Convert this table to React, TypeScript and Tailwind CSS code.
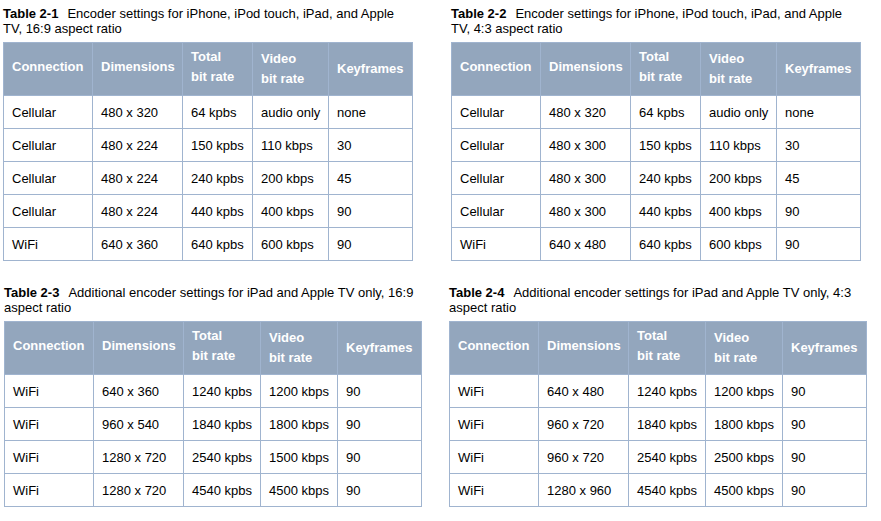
import React from "react";

type Table = {
  num: string;
  line1: string;
  line2: string;
  width: string;
  cols: string[];
  rows: string[][];
};

const headers = [
  { lines: ["Connection"], pad: "pt-[14px]" },
  { lines: ["Dimensions"], pad: "pt-[14px]" },
  { lines: ["Total", "bit rate"], pad: "pt-[4px]" },
  { lines: ["Video", "bit rate"], pad: "pt-[6px]" },
  { lines: ["Keyframes"], pad: "pt-[16px]" },
];

const narrow = ["w-[89px]", "w-[90px]", "w-[70px]", "w-[76px]", "w-[84px]"];
const wide = ["w-[89px]", "w-[90px]", "w-[77px]", "w-[77px]", "w-[84px]"];

const tables: Table[] = [
  {
    num: "Table 2-1",
    line1: "Encoder settings for iPhone, iPod touch, iPad, and Apple",
    line2: "TV, 16:9 aspect ratio",
    width: "w-[410px]",
    cols: narrow,
    rows: [
      ["Cellular", "480 x 320", "64 kpbs", "audio only", "none"],
      ["Cellular", "480 x 224", "150 kpbs", "110 kbps", "30"],
      ["Cellular", "480 x 224", "240 kpbs", "200 kbps", "45"],
      ["Cellular", "480 x 224", "440 kpbs", "400 kbps", "90"],
      ["WiFi", "640 x 360", "640 kpbs", "600 kbps", "90"],
    ],
  },
  {
    num: "Table 2-2",
    line1: "Encoder settings for iPhone, iPod touch, iPad, and Apple",
    line2: "TV, 4:3 aspect ratio",
    width: "w-[410px]",
    cols: narrow,
    rows: [
      ["Cellular", "480 x 320", "64 kpbs", "audio only", "none"],
      ["Cellular", "480 x 300", "150 kpbs", "110 kbps", "30"],
      ["Cellular", "480 x 300", "240 kpbs", "200 kbps", "45"],
      ["Cellular", "480 x 300", "440 kpbs", "400 kbps", "90"],
      ["WiFi", "640 x 480", "640 kpbs", "600 kbps", "90"],
    ],
  },
  {
    num: "Table 2-3",
    line1: "Additional encoder settings for iPad and Apple TV only, 16:9",
    line2: "aspect ratio",
    width: "w-[418px]",
    cols: wide,
    rows: [
      ["WiFi", "640 x 360", "1240 kpbs", "1200 kbps", "90"],
      ["WiFi", "960 x 540", "1840 kpbs", "1800 kbps", "90"],
      ["WiFi", "1280 x 720", "2540 kpbs", "1500 kbps", "90"],
      ["WiFi", "1280 x 720", "4540 kpbs", "4500 kbps", "90"],
    ],
  },
  {
    num: "Table 2-4",
    line1: "Additional encoder settings for iPad and Apple TV only, 4:3",
    line2: "aspect ratio",
    width: "w-[418px]",
    cols: wide,
    rows: [
      ["WiFi", "640 x 480", "1240 kpbs", "1200 kbps", "90"],
      ["WiFi", "960 x 720", "1840 kpbs", "1800 kbps", "90"],
      ["WiFi", "960 x 720", "2540 kpbs", "2500 kbps", "90"],
      ["WiFi", "1280 x 960", "4540 kpbs", "4500 kbps", "90"],
    ],
  },
];

const SettingsTable = ({ t }: { t: Table }) => (
  <div>
    <p className="text-[13px] leading-[15px] text-black whitespace-nowrap mb-[6px]">
      <span className="font-bold mr-[9px]">{t.num}</span>
      {t.line1}
      <br />
      {t.line2}
    </p>
    <table className={`${t.width} table-fixed border-collapse border border-[#a0b4cf]`}>
      <colgroup>
        {t.cols.map((c, i) => (
          <col key={i} className={c} />
        ))}
      </colgroup>
      <thead>
        <tr className="bg-[#93a6bd]">
          {headers.map((h, i) => (
            <th
              key={i}
              className={`${h.pad} h-[53px] align-top border border-[#a0b4cf] px-[8px] text-left font-bold text-white leading-[20px]`}
            >
              {h.lines.map((l) => (
                <div key={l}>{l}</div>
              ))}
            </th>
          ))}
        </tr>
      </thead>
      <tbody>
        {t.rows.map((r, ri) => (
          <tr key={ri}>
            {r.map((c, ci) => (
              <td
                key={ci}
                className="h-[33px] border border-[#a0b4cf] px-[8px] align-middle text-black leading-[15px] whitespace-nowrap"
              >
                {c}
              </td>
            ))}
          </tr>
        ))}
      </tbody>
    </table>
  </div>
);

export default function App() {
  return (
    <div
      className="w-[881px] h-[521px] bg-white text-[13px] pt-[6px]"
      style={{ fontFamily: '"Liberation Sans", Arial, sans-serif' }}
    >
      <div className="flex">
        <div className="w-[448px] pl-[3px]">
          <SettingsTable t={tables[0]} />
        </div>
        <div className="pl-[3px]">
          <SettingsTable t={tables[1]} />
        </div>
      </div>
      <div className="flex mt-[24px]">
        <div className="w-[449px] pl-[4px]">
          <SettingsTable t={tables[2]} />
        </div>
        <div>
          <SettingsTable t={tables[3]} />
        </div>
      </div>
    </div>
  );
}
